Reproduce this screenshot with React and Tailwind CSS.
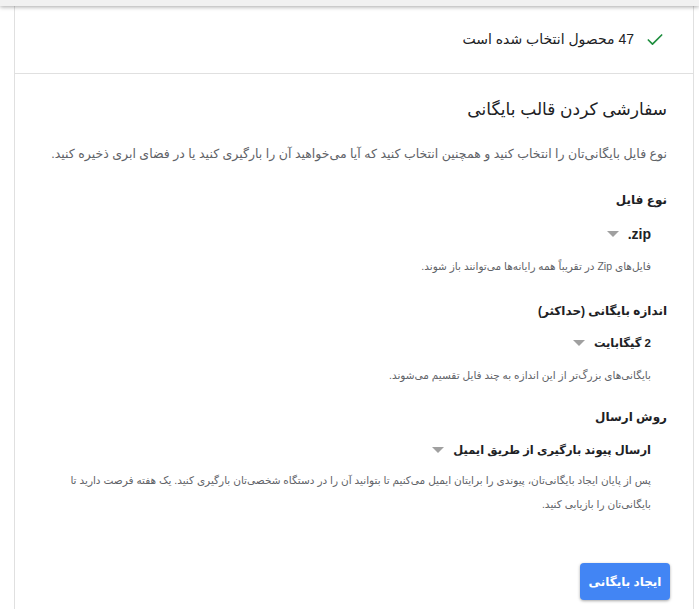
import { Check } from 'lucide-react';

const FONT = { fontFamily: '"Liberation Sans", "DejaVu Sans", Arial, sans-serif' };

function Caret() {
  return (
    <svg width="12" height="6" viewBox="0 0 12 6" className="shrink-0">
      <path d="M0 0h12L6 6z" fill="#a0a0a0" />
    </svg>
  );
}

function Field({ label, value, help, gap, valueGap = 'mt-[14px]', helpGap = 'mt-[10px]' }) {
  return (
    <div className={gap}>
      <div className="text-[12px] font-bold text-[#202124] leading-[20px]">{label}</div>
      <div className={`pr-[16px] ${valueGap} flex items-center gap-[9px] text-[11.5px] text-[#202124] leading-[20px] font-bold`}>
        {value}
        <Caret />
      </div>
      <p className={`pr-[16px] ${helpGap} text-[10.5px] text-[#5f6368] leading-[24px]`}>{help}</p>
    </div>
  );
}

export default function App() {
  return (
    <div dir="rtl" className="min-h-screen bg-white" style={FONT}>
      <div className="relative z-10 h-[6px] bg-[#f1f1f1] shadow-[0_1px_4px_rgba(0,0,0,0.35)]" />
      <div className="ml-[14px] mr-[5px] min-h-[603px] border-x border-[#e0e0e0]">
        {/* selected count */}
        <div className="h-[68px] flex items-center gap-[11px] pr-[28px] border-b border-[#e0e0e0]">
          <Check size={20} strokeWidth={2} className="text-[#1e8e3e]" />
          <span className="text-[14px] text-[#202124]">47 محصول انتخاب شده است</span>
        </div>

        {/* customise */}
        <div className="pr-[26px] pl-[20px] pt-[22px] pb-[8px]">
          <h2 className="text-[17px] text-[#202124] leading-[28px]">سفارشی کردن قالب بایگانی</h2>
          <p className="mt-[20px] text-[12.5px] text-[#5f6368] leading-[20px]">
            نوع فایل بایگانی‌تان را انتخاب کنید و همچنین انتخاب کنید که آیا می‌خواهید آن را بارگیری کنید یا در فضای ابری ذخیره کنید.
          </p>

          <div className="mt-[26px]">
            <Field
              gap="mb-[23px]"
              label="نوع فایل"
              value={<span dir="ltr" className="text-[14px]">.zip</span>}
              help="فایل‌های Zip در تقریباً همه رایانه‌ها می‌توانند باز شوند."
            />
            <Field
              gap="mb-[20px]"
              valueGap="mt-[12px]"
              label="اندازه بایگانی (حداکثر)"
              value={<span>2 گیگابایت</span>}
              help="بایگانی‌های بزرگ‌تر از این اندازه به چند فایل تقسیم می‌شوند."
            />
            <Field
              valueGap="mt-[13px]"
              helpGap="mt-[8px]"
              label="روش ارسال"
              value={<span>ارسال پیوند بارگیری از طریق ایمیل</span>}
              help="پس از پایان ایجاد بایگانی‌تان، پیوندی را برایتان ایمیل می‌کنیم تا بتوانید آن را در دستگاه شخصی‌تان بارگیری کنید. یک هفته فرصت دارید تا بایگانی‌تان را بازیابی کنید."
            />
          </div>

          <div className="flex mt-[47px]">
            <button className="-mr-[3px] h-[37px] w-[90px] rounded-[4px] bg-[#4285f4] text-white text-[12px] font-bold shadow-[0_1px_3px_rgba(0,0,0,0.35)]">
              ایجاد بایگانی
            </button>
          </div>
        </div>
      </div>
    </div>
  );
}
